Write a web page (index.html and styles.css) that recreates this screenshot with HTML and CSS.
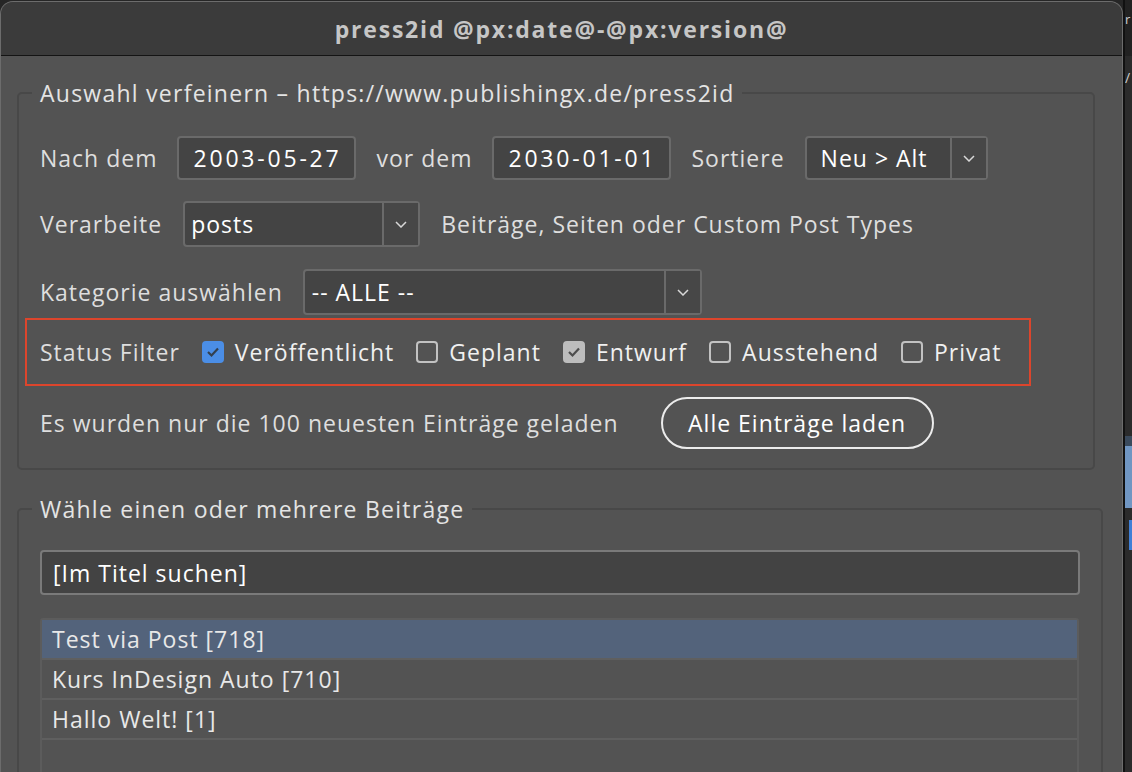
FILE: index.html
```html
<!DOCTYPE html>
<html>
<head>
    <title>press2id</title>
    <meta charset="UTF-8">
    <link rel="stylesheet" href="styles.css">
</head>
<body>
    <div class="window">
        <div class="titlebar">press2id @px:date@-@px:version@</div>

        <div class="content">
            <fieldset class="group group-filter">
                <legend>Auswahl verfeinern – https://www.publishingx.de/press2id</legend>

                <div class="row row-dates">
                    <span class="label">Nach dem</span>
                    <div class="field date">2003-05-27</div>
                    <span class="label">vor dem</span>
                    <div class="field date">2030-01-01</div>
                    <span class="label">Sortiere</span>
                    <div class="dropdown sort">
                        <span class="value">Neu &gt; Alt</span>
                        <span class="arrow"><svg width="12" height="7" viewBox="0 0 12 7"><polyline points="1,1 6,6 11,1" fill="none" stroke="#d8d8d8" stroke-width="1.5"/></svg></span>
                    </div>
                </div>

                <div class="row row-type">
                    <span class="label">Verarbeite</span>
                    <div class="dropdown type">
                        <span class="value">posts</span>
                        <span class="arrow"><svg width="12" height="7" viewBox="0 0 12 7"><polyline points="1,1 6,6 11,1" fill="none" stroke="#d8d8d8" stroke-width="1.5"/></svg></span>
                    </div>
                    <span class="label">Beiträge, Seiten oder Custom Post Types</span>
                </div>

                <div class="row row-cat">
                    <span class="label">Kategorie auswählen</span>
                    <div class="dropdown cat">
                        <span class="value">-- ALLE --</span>
                        <span class="arrow"><svg width="12" height="7" viewBox="0 0 12 7"><polyline points="1,1 6,6 11,1" fill="none" stroke="#d8d8d8" stroke-width="1.5"/></svg></span>
                    </div>
                </div>

                <div class="status-box">
                    <span class="label">Status Filter</span>
                    <label class="check"><span class="box on-blue"><svg width="14" height="12" viewBox="0 0 14 12"><polyline points="2,6 5.5,9.5 12,2.5" fill="none" stroke="#33404f" stroke-width="2.2"/></svg></span>Veröffentlicht</label>
                    <label class="check"><span class="box"></span>Geplant</label>
                    <label class="check"><span class="box on-grey"><svg width="14" height="12" viewBox="0 0 14 12"><polyline points="2,6 5.5,9.5 12,2.5" fill="none" stroke="#4d4d4d" stroke-width="2.2"/></svg></span>Entwurf</label>
                    <label class="check"><span class="box"></span>Ausstehend</label>
                    <label class="check"><span class="box"></span>Privat</label>
                </div>

                <div class="row row-load">
                    <span class="label">Es wurden nur die 100 neuesten Einträge geladen</span>
                    <button class="pill">Alle Einträge laden</button>
                </div>
            </fieldset>

            <fieldset class="group group-posts">
                <legend>Wähle einen oder mehrere Beiträge</legend>
                <div class="search">[Im Titel suchen]</div>
                <div class="post-list">
                    <div class="post selected">Test via Post [718]</div>
                    <div class="post">Kurs InDesign Auto [710]</div>
                    <div class="post">Hallo Welt! [1]</div>
                    <div class="post"></div>
                    <div class="post"></div>
                </div>
            </fieldset>
        </div>
    </div>

    <div class="backdrop">
        <div class="bd-top">r</div>
        <div class="bd-slash">/</div>
        <div class="bd-image"></div>
        <div class="bd-bar"></div>
    </div>
</body>
</html>
```

FILE: styles.css
```css
body {
    margin: 0;
    height: 772px;
    overflow: hidden;
    display: flex;
    background: #262626;
    font-family: "Open Sans", "Noto Sans", sans-serif;
}
.window {
    width: 1123px;
    flex: none;
    box-sizing: border-box;
    margin-top: 1px;
    background: #535353;
    border: 1px solid #6c6c6c;
    border-bottom: none;
    border-radius: 13px 13px 0 0;
    overflow: hidden;
}
.titlebar {
    height: 53px;
    background: #3b3b3b;
    border-bottom: 1px solid #141414;
    display: flex;
    align-items: center;
    justify-content: center;
    color: #c6c6c6;
    font-weight: 700;
    font-size: 23px;
    letter-spacing: 1.8px;
}
.content {
    padding: 22px 0 0 16px;
    color: #dedede;
    font-size: 23px;
    font-weight: 500;
    letter-spacing: 1px;
}
.group {
    margin: 0;
    min-width: 0;
    box-sizing: border-box;
    border: 2px solid #484848;
    border-radius: 5px;
    padding: 0 0 19px 21px;
}
.group legend {
    padding: 0 8px;
    margin-left: -8px;
    line-height: 30px;
    color: #e4e4e4;
    letter-spacing: 1.25px;
}
.group-filter { width: 1078px; }
.group-posts { width: 1086px; margin-top: 24px; height: 320px; }

.row {
    display: flex;
    align-items: center;
    gap: 20px;
}
.label { white-space: nowrap; }
.row-dates { margin-top: 28px; height: 44px; }
.row-type { margin-top: 21px; height: 46px; gap: 21px; }
.row-cat { margin-top: 22px; height: 46px; gap: 20px; }
.row-load { margin-top: 11px; height: 52px; gap: 42px; }

.field {
    height: 44px;
    box-sizing: border-box;
    border: 2px solid #6a6a6a;
    border-radius: 4px;
    background: #444444;
    color: #fff;
    display: flex;
    align-items: center;
}
.field.date { width: 179px; padding-left: 14px; letter-spacing: 2.8px; }

.dropdown {
    display: flex;
    height: 46px;
    box-sizing: border-box;
    border: 2px solid #6a6a6a;
    border-radius: 4px;
    background: #444444;
    color: #fff;
}
.dropdown .value {
    flex: 1;
    display: flex;
    align-items: center;
    white-space: nowrap;
}
.dropdown .arrow {
    width: 34px;
    border-left: 2px solid #6a6a6a;
    display: flex;
    align-items: center;
    justify-content: center;
    background: #474747;
}
.dropdown.sort { width: 183px; height: 44px; }
.dropdown.sort .value { padding-left: 14px; }
.dropdown.type { width: 237px; }
.dropdown.type .value { padding-left: 6px; }
.dropdown.cat { width: 399px; }
.dropdown.cat .value { padding-left: 7px; }

.status-box {
    margin: 3px 0 0 -15px;
    width: 1006px;
    height: 68px;
    box-sizing: border-box;
    border: 2px solid #dc452c;
    padding-left: 13px;
    display: flex;
    align-items: center;
    gap: 22px;
}
.check {
    display: flex;
    align-items: center;
    gap: 11px;
    color: #f0f0f0;
}
.box {
    width: 22px;
    height: 22px;
    box-sizing: border-box;
    border: 2px solid #c2c2c2;
    border-radius: 4px;
    display: flex;
    align-items: center;
    justify-content: center;
}
.box.on-blue { background: #4b8ee6; border-color: #4b8ee6; }
.box.on-grey { background: #bdbdbd; border-color: #bdbdbd; }

.pill {
    width: 273px;
    height: 52px;
    border: 2px solid #ececec;
    border-radius: 26px;
    background: transparent;
    color: #fff;
    font: inherit;
    letter-spacing: inherit;
    padding: 0;
}

.search {
    margin-top: 26px;
    width: 1040px;
    height: 45px;
    box-sizing: border-box;
    border: 2px solid #7a7a7a;
    border-radius: 4px;
    background: #434343;
    color: #fff;
    padding-left: 11px;
    display: flex;
    align-items: center;
}
.post-list {
    margin-top: 23px;
    width: 1039px;
    box-sizing: border-box;
    border: 2px solid #5c5c5c;
    border-radius: 3px;
}
.post {
    height: 38px;
    border-bottom: 2px solid #5f5f5f;
    padding-left: 10px;
    display: flex;
    align-items: center;
    color: #e8e8e8;
}
.post.selected { background: #53637b; }

.backdrop {
    flex: 1;
    border-left: 2px solid #111;
    background: #2b2b2b;
    color: #d0d0d0;
    font-family: "Open Sans", sans-serif;
    overflow: hidden;
}
.bd-top { height: 56px; font-size: 13px; line-height: 38px; background: #222; }
.bd-slash { height: 380px; font-size: 14px; line-height: 44px; }
.bd-image { height: 72px; background: linear-gradient(#3a4a5c 0 10px, #7096c2 10px); }
.bd-bar { margin: 12px 0 0 4px; height: 30px; background: #3f7fd6; }
```
